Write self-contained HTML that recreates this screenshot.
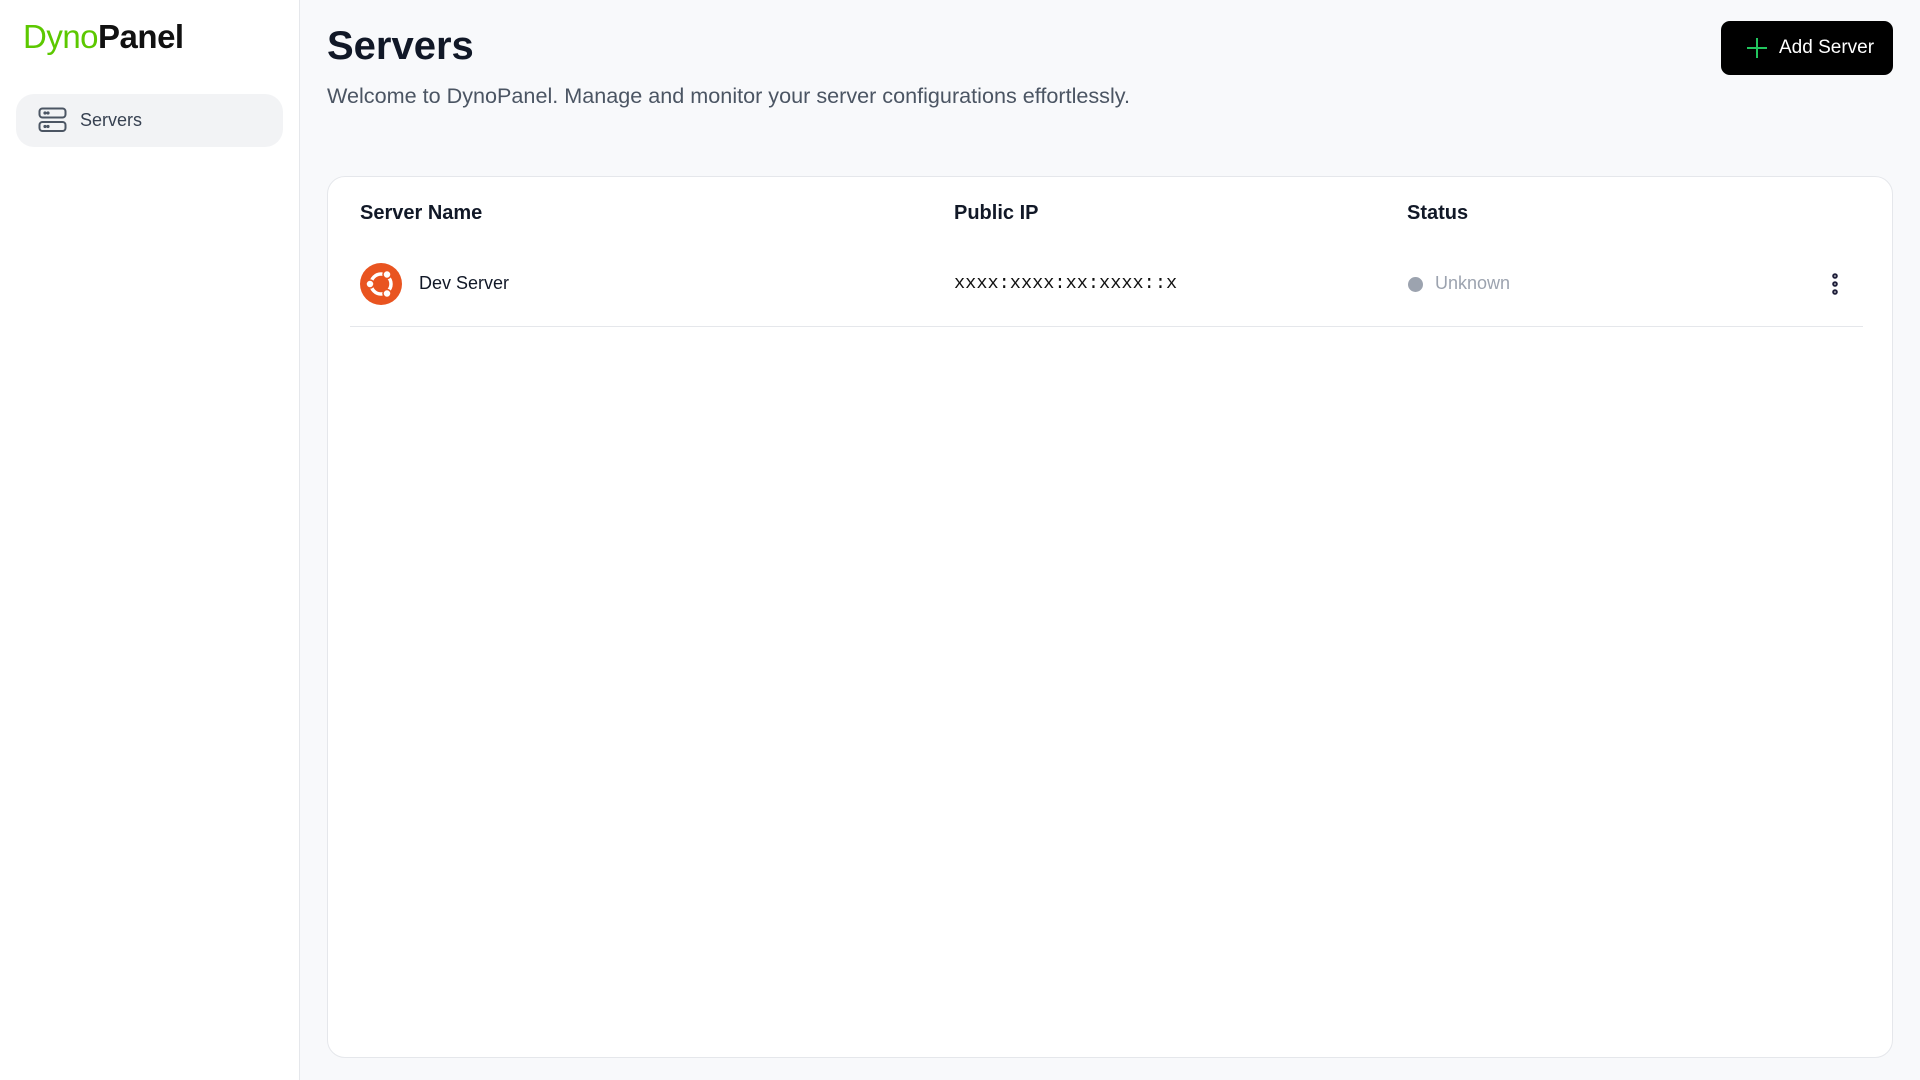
<!DOCTYPE html>
<html><head><meta charset="utf-8"><style>
*{box-sizing:border-box;margin:0;padding:0}
body{width:1920px;height:1080px;overflow:hidden;background:#f8f9fb;font-family:"Liberation Sans",sans-serif;position:relative;color:#111827}
.side{position:absolute;left:0;top:0;width:300px;height:1080px;background:#fff;border-right:1px solid #e5e7eb}
.logo{position:absolute;left:23px;top:18px;font-size:33px;letter-spacing:-0.5px}
.logo .g{color:#5cc800}.logo .d{color:#111;font-weight:bold}
.nav{position:absolute;left:16px;top:94px;width:267px;height:53px;background:#f2f3f5;border-radius:18px}
.nav svg{position:absolute;left:22px;top:13px}
.nav span{position:absolute;left:64px;top:16px;font-size:18px;color:#374151}
h1{position:absolute;left:327px;top:24px;font-size:40px;font-weight:bold;color:#111827}
.sub{position:absolute;left:327px;top:83px;font-size:21.6px;color:#4b5563}
.btn{position:absolute;left:1721px;top:21px;width:172px;height:54px;background:#000;border-radius:9px;color:#fff;font-size:19px}
.btn svg{position:absolute;left:25px;top:16px}
.btn span{position:absolute;left:58px;top:16px}
.card{position:absolute;left:327px;top:176px;width:1566px;height:882px;background:#fff;border:1px solid #e5e7eb;border-radius:18px}
.th{position:absolute;top:25px;font-size:20px;font-weight:bold;color:#111827}
.td{position:absolute;top:96px;font-size:18px}
.line{position:absolute;left:22px;top:149px;width:1513px;height:1px;background:#e5e7eb}
</style></head><body>
<div class="side">
<div class="logo"><span class="g">Dyno</span><span class="d">Panel</span></div>
<div class="nav">
<svg width="29" height="26" viewBox="0 0 29 26" fill="none" stroke="#4b5563" stroke-width="2"><rect x="1.5" y="1.5" width="26" height="9" rx="3"/><rect x="1.5" y="15" width="26" height="9" rx="3"/><circle cx="7" cy="6" r=".6" fill="#4b5563"/><circle cx="10" cy="6" r=".6" fill="#4b5563"/><circle cx="7" cy="19.5" r=".6" fill="#4b5563"/><circle cx="10" cy="19.5" r=".6" fill="#4b5563"/></svg>
<span>Servers</span></div>
</div>
<h1>Servers</h1>
<div class="sub">Welcome to DynoPanel. Manage and monitor your server configurations effortlessly.</div>
<div class="btn"><svg width="22" height="22" viewBox="0 0 22 22" stroke="#22c55e" stroke-width="2"><path d="M11 1v20M1 11h20"/></svg><span>Add Server</span></div>
<div class="card">
<div class="th" style="left:32px">Server Name</div>
<div class="th" style="left:626px">Public IP</div>
<div class="th" style="left:1079px">Status</div>
<svg style="position:absolute;left:32px;top:86px" width="42" height="42" viewBox="0 0 42 42"><circle cx="21" cy="21" r="21" fill="#e95420"/><circle cx="21" cy="21" r="10" fill="none" stroke="#fff" stroke-width="3.5"/><circle cx="10" cy="21" r="4" fill="#fff" stroke="#e95420" stroke-width="1.5"/><circle cx="27" cy="11.5" r="4" fill="#fff" stroke="#e95420" stroke-width="1.5"/><circle cx="27" cy="30.5" r="4" fill="#fff" stroke="#e95420" stroke-width="1.5"/></svg>
<div class="td" style="left:91px;color:#111827">Dev Server</div>
<div class="td" style="left:626px;top:96px;font-family:'Liberation Mono',monospace;font-size:18.6px;color:#111">xxxx:xxxx:xx:xxxx::x</div>
<div style="position:absolute;left:1080px;top:100px;width:15px;height:15px;border-radius:50%;background:#9ca3af"></div>
<div class="td" style="left:1107px;color:#9ca3af">Unknown</div>
<svg style="position:absolute;left:1500px;top:95px" width="14" height="24" viewBox="0 0 14 24" fill="none" stroke="#1f1f3a" stroke-width="2"><circle cx="7" cy="4" r="1.8"/><circle cx="7" cy="12" r="1.8"/><circle cx="7" cy="20" r="1.8"/></svg>
<div class="line"></div>
</div>
</body></html>
